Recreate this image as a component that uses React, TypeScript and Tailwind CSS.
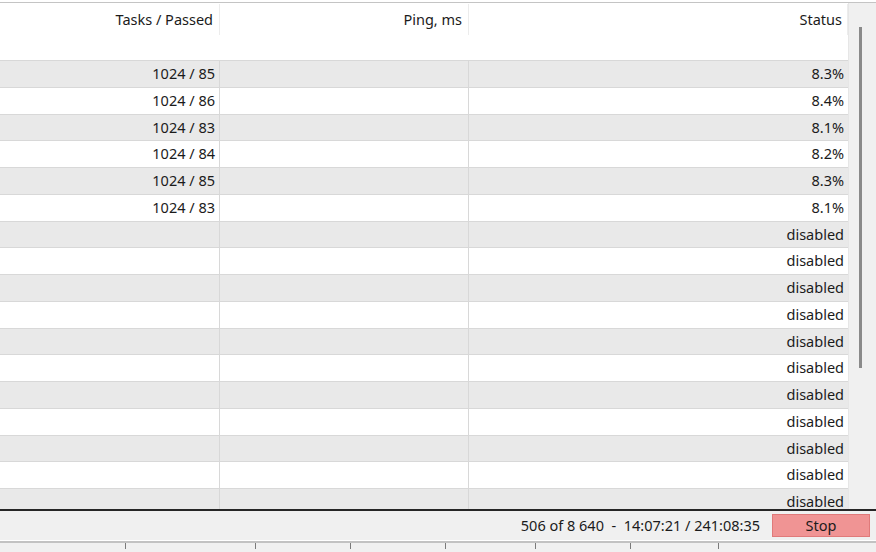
import React from "react";

const rows: { tasks: string; status: string }[] = [
  { tasks: "1024 / 85", status: "8.3%" },
  { tasks: "1024 / 86", status: "8.4%" },
  { tasks: "1024 / 83", status: "8.1%" },
  { tasks: "1024 / 84", status: "8.2%" },
  { tasks: "1024 / 85", status: "8.3%" },
  { tasks: "1024 / 83", status: "8.1%" },
  ...Array.from({ length: 11 }, () => ({ tasks: "", status: "disabled" })),
];

const ticks = [125, 255, 350, 445, 535, 630, 718];

export default function App() {
  return (
    <div className="w-[876px] h-[552px] overflow-hidden bg-[#f0f0f0] flex flex-col text-[14.5px] text-[#1b1b1b] font-['Noto_Sans',sans-serif]">
      <div className="h-[2px] bg-white" />
      <div className="h-[1px] bg-[#c4c4c4]" />

      {/* table + scrollbar */}
      <div className="flex h-[506px]">
        <div className="w-[849px] bg-white flex flex-col overflow-hidden border-r border-[#e6e6e6]">
          {/* header */}
          <div className="flex h-[33px] shrink-0">
            <div className="w-[220px] flex items-center justify-end pr-[6px] border-r border-[#ececec] my-[1px]">
              Tasks / Passed
            </div>
            <div className="w-[249px] flex items-center justify-end pr-[6px] border-r border-[#ececec] my-[1px]">
              Ping, ms
            </div>
            <div className="flex-1 flex items-center justify-end pr-[5px] border-r border-[#ececec] my-[1px]">
              Status
            </div>
          </div>
          <div className="h-[25px] shrink-0 border-b border-[#d8d8d8]" />

          {rows.map((r, i) => (
            <div
              key={i}
              className={`flex h-[26.75px] shrink-0 border-b border-[#d8d8d8] ${i % 2 === 0 ? "bg-[#e9e9e9]" : "bg-white"}`}
            >
              <div className="w-[220px] flex items-center justify-end pr-[4px] border-r border-[#d8d8d8]">
                {r.tasks}
              </div>
              <div className="w-[249px] border-r border-[#d8d8d8]" />
              <div className="flex-1 flex items-center justify-end pr-[4px]">{r.status}</div>
            </div>
          ))}
        </div>

        {/* vertical scrollbar */}
        <div className="flex-1 bg-[#f0f0f0] pt-[24px] pl-[10px]">
          <div className="w-[3px] h-[341px] bg-[#8a8a8a]" />
        </div>
      </div>

      <div className="h-[2px] bg-[#262626]" />

      {/* status bar */}
      <div className="h-[29px] flex items-center justify-end pr-[6px] gap-[12px]">
        <span className="whitespace-pre">506 of 8 640  -  14:07:21 / 241:08:35</span>
        <button className="w-[98px] h-[23px] bg-[#f09494] border border-[#e07a7a] flex items-center justify-center">
          Stop
        </button>
      </div>

      <div className="h-[1px] bg-white" />
      <div className="h-[2px] bg-[#c2c2c2]" />
      <div className="flex-1 flex items-start">
        {ticks.map((x, i) => (
          <div
            key={x}
            className="w-[1px] h-[6px] bg-[#7a7a7a]"
            style={{ marginLeft: i === 0 ? x : x - ticks[i - 1] - 1 }}
          />
        ))}
      </div>
    </div>
  );
}
